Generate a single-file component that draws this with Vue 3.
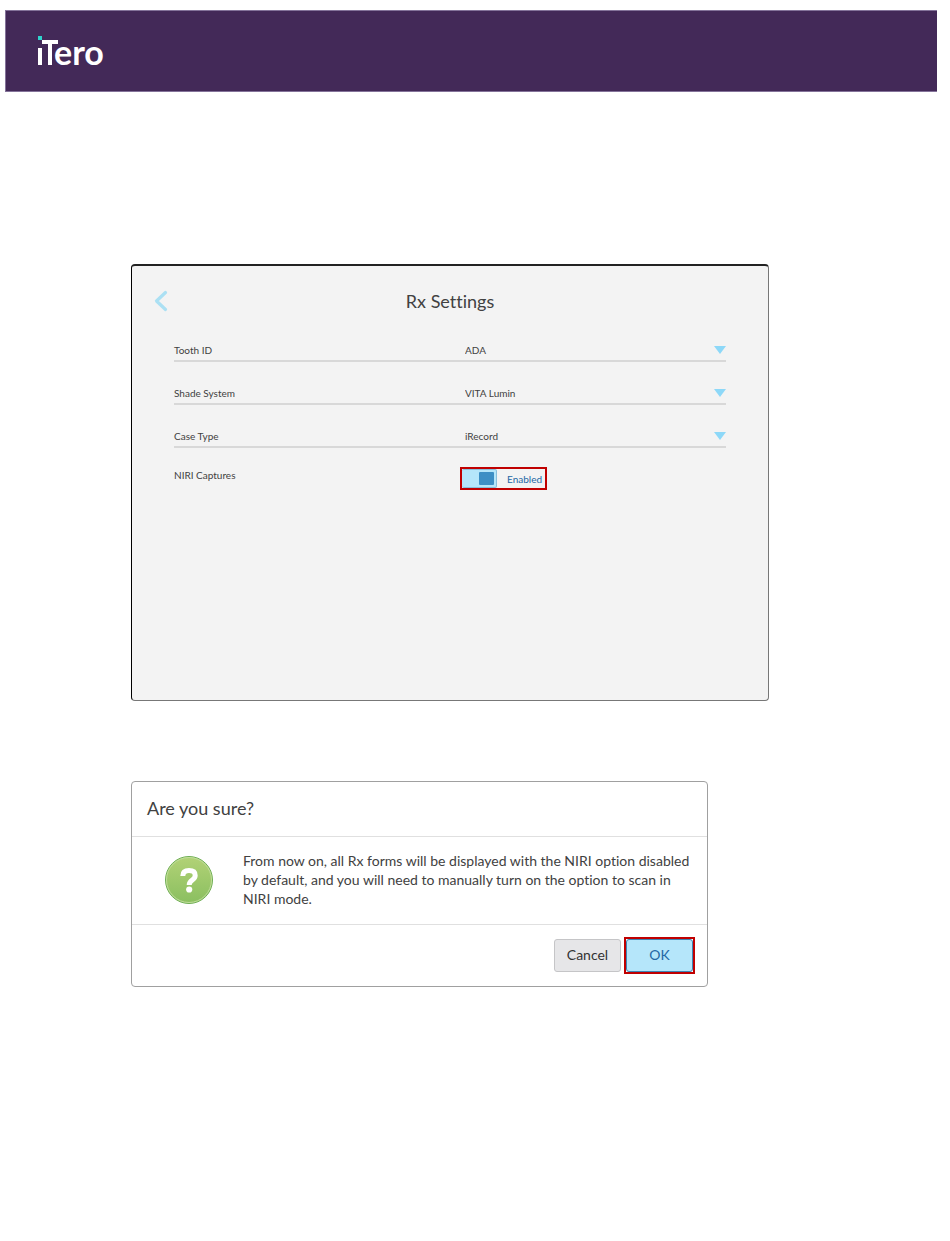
<script setup>
import { ref } from 'vue'

const settings = ref([
  { id: 'tooth-id', label: 'Tooth ID', value: 'ADA' },
  { id: 'shade-system', label: 'Shade System', value: 'VITA Lumin' },
  { id: 'case-type', label: 'Case Type', value: 'iRecord' },
])
const niri = ref(true)
</script>

<template>
  <div class="page">
    <header class="banner">
      <svg class="logo" width="76" height="52" viewBox="0 0 76 52" role="img" aria-label="iTero">
        <rect x="1" y="11" width="4" height="4" fill="#2fd3cd" />
        <path d="M3 23v17M5 17h16M13 17v23" fill="none" stroke="#fff" stroke-width="4" />
        <text class="logo-type" x="17" y="40">ero</text>
      </svg>
    </header>

    <main class="content">
      <section class="panel">
        <div class="panel-head">
          <button class="back" type="button" aria-label="Back">
            <svg width="14" height="22" viewBox="0 0 14 22">
              <path d="M11.500 2.500 2.500 11l9 8.500" fill="none" stroke="#abe0f3" stroke-width="3.200" stroke-linecap="round" stroke-linejoin="round" />
            </svg>
          </button>
          <h1>Rx Settings</h1>
        </div>

        <div class="rows">
          <div v-for="item in settings" :key="item.id" class="row line">
            <label :for="item.id">{{ item.label }}</label>
            <div class="field">
              <select :id="item.id" v-model="item.value">
                <option>{{ item.value }}</option>
              </select>
              <svg class="arrow" width="12" height="8" viewBox="0 0 12 8"><path d="M0 0h12L6 8z" fill="#8dd8f8" /></svg>
            </div>
          </div>
          <div class="row niri">
            <label for="niri">NIRI Captures</label>
            <div class="toggle">
              <input id="niri" v-model="niri" type="checkbox" role="switch" />
              <span>{{ niri ? 'Enabled' : 'Disabled' }}</span>
            </div>
          </div>
        </div>
      </section>

      <section class="dialog" role="dialog" aria-labelledby="dialog-title">
        <h2 id="dialog-title">Are you sure?</h2>
        <div class="message">
          <svg class="question" width="48" height="48" viewBox="0 0 48 48" aria-hidden="true">
            <defs>
              <linearGradient id="green" x1="0" y1="0" x2="0" y2="1">
                <stop offset="0" stop-color="#b2d276" />
                <stop offset="1" stop-color="#8abf60" />
              </linearGradient>
            </defs>
            <circle cx="24" cy="24" r="23.500" fill="url(#green)" stroke="#6eae54" />
            <circle cx="24" cy="24" r="22.500" fill="none" stroke="#c1dd9b" stroke-width="1" />
            <path d="M17.800 20c0-3.700 2.400-5.400 6.200-5.400 3.600 0 6.200 1.500 6.200 4.900 0 4.800-6 4.200-6 9.500" fill="none" stroke="#fff" stroke-width="5" />
            <circle cx="24.200" cy="33.500" r="3.100" fill="#fff" />
          </svg>
          <p>From now on, all Rx forms will be displayed with the NIRI option disabled by default, and you will need to manually turn on the option to scan in NIRI mode.</p>
        </div>
        <div class="actions">
          <button class="btn" type="button">Cancel</button>
          <div class="mark"><button class="btn ok" type="button">OK</button></div>
        </div>
      </section>
    </main>
  </div>
</template>

<style>
body {
  background: #fff;
}
</style>

<style scoped>
* {
  box-sizing: border-box;
}
.page {
  padding: 10px 13px 40px 5px;
  font-family: Lato, "Open Sans", sans-serif;
  font-variant-ligatures: none;
  color: #414141;
}
.banner {
  height: 82px;
  padding: 14px 31px;
  background: #432958;
  border: 1px solid #84739a;
  border-right: 0;
}
.logo {
  display: block;
}
.logo-type {
  font: 700 34px Lato, sans-serif;
  fill: #fff;
}
.content {
  padding: 172px 168px 0 126px;
}
.panel {
  min-height: 437px;
  padding: 23px 42px 0;
  background: #f3f3f3;
  border: 1px solid #777;
  border-top: 2px solid #222;
  border-left-color: #000;
  border-radius: 4px;
}
.panel-head {
  display: grid;
  grid-template-columns: 14px 1fr 14px;
  align-items: center;
  margin: 0 -20px;
}
.back {
  padding: 0;
  border: 0;
  background: none;
}
.back svg {
  display: block;
}
h1 {
  margin: 0;
  font-size: 18px;
  line-height: 24px;
  font-weight: 400;
  text-align: center;
}
.rows {
  margin-top: 6px;
}
.row {
  display: grid;
  grid-template-columns: 29fr 26fr;
  font-size: 10px;
  line-height: 16px;
}
.line {
  height: 43px;
  align-items: end;
  padding-bottom: 2px;
  border-bottom: 2px solid #d8d8d8;
}
.field {
  display: grid;
  align-items: center;
}
.field > * {
  grid-area: 1 / 1;
}
select {
  appearance: none;
  width: 100%;
  height: 16px;
  padding: 0;
  border: 0;
  background: none;
  color: inherit;
  font: inherit;
  line-height: 16px;
}
.arrow {
  justify-self: end;
  pointer-events: none;
}
.niri {
  padding-top: 19px;
}
.toggle {
  display: flex;
  align-items: center;
  justify-self: start;
  gap: 10px;
  height: 23px;
  margin-left: -5px;
  padding-right: 3px;
  border: 2px solid #c00000;
  color: #2468a5;
}
.toggle input {
  appearance: none;
  display: flex;
  align-items: center;
  width: 35px;
  height: 19px;
  margin: 0;
  padding: 0 2px;
  background: #b5e6fa;
  border: 1px solid #88bfdb;
  border-left: 0;
  border-radius: 2px;
}
.toggle input::before {
  content: "";
  width: 15px;
  height: 13px;
  border-radius: 1px;
  background: #3d8fc5;
}
.toggle input:checked::before {
  margin-left: auto;
}
.dialog {
  margin: 80px 61px 0 0;
  border: 1px solid #a0a0a0;
  border-radius: 4px;
}
h2 {
  margin: 0;
  padding: 14px 15px 16px;
  font-size: 18px;
  line-height: 24px;
  font-weight: 400;
  border-bottom: 1px solid #e0e0e0;
}
.message {
  display: grid;
  grid-template-columns: 48px 1fr;
  align-items: center;
  gap: 30px;
  padding: 14px 15px 16px 33px;
}
.message p {
  margin: 0;
  font-size: 14px;
  line-height: 19px;
}
.actions {
  display: flex;
  justify-content: flex-end;
  align-items: center;
  gap: 3px;
  padding: 12px;
  border-top: 1px solid #e0e0e0;
}
.btn {
  width: 67px;
  height: 33px;
  padding: 0 0 2px;
  background: #e6e6e8;
  border: 1px solid #c5c5c7;
  border-radius: 3px;
  color: #333;
  font: 14px Lato, sans-serif;
}
.ok {
  display: block;
  background: #b5e6fa;
  border-color: #3d86b5;
  color: #2468a5;
}
.mark {
  border: 2px solid #c00000;
}
</style>
